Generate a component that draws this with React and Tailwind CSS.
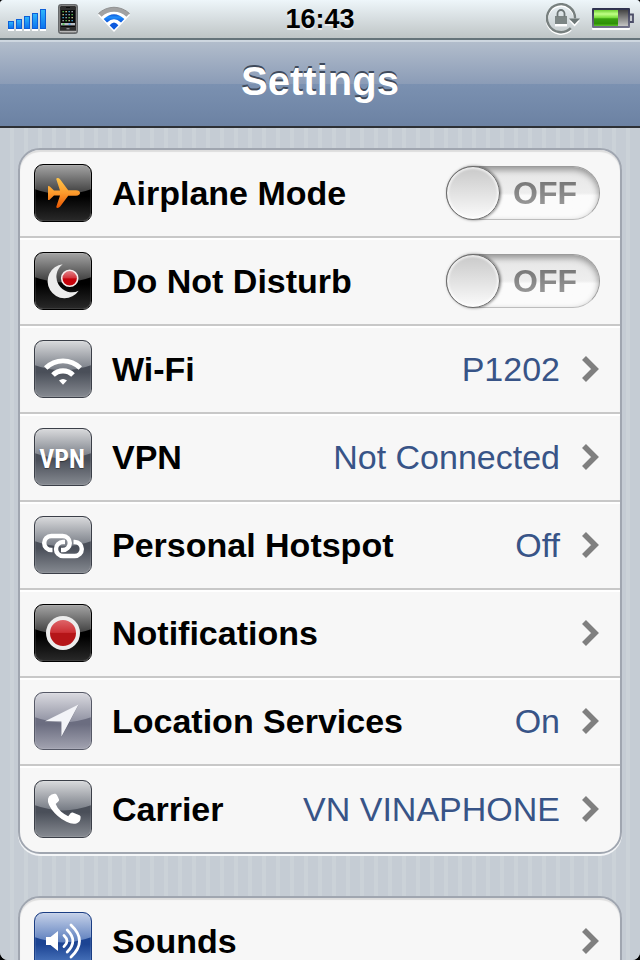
import { useState } from "react";

const tiles = {
  black: { top: "#a8a8a8", mid: "#3c3c3c", low: "#000000", bottom: "#2b2b2b", edge: "#000000" },
  gray: { top: "#dcdddf", mid: "#777c85", low: "#4a4f59", bottom: "#888c93", edge: "#3b3f48" },
  silver: { top: "#dcdce2", mid: "#9092a2", low: "#6b6d80", bottom: "#a4a5b2", edge: "#555866" },
  blue: { top: "#c9d4ea", mid: "#5c7ebd", low: "#1c4493", bottom: "#5b86cb", edge: "#1a3d83" },
};

function Tile({ id, tone, children }) {
  const c = tiles[tone];
  return (
    <svg viewBox="0 0 58 58" className="size-[58px] shrink-0" aria-hidden="true">
      <defs>
        <linearGradient id={`${id}-gloss`} x1="0" y1="0" x2="0" y2="30" gradientUnits="userSpaceOnUse">
          <stop offset="0" stopColor={c.top} />
          <stop offset="1" stopColor={c.mid} />
        </linearGradient>
        <linearGradient id={`${id}-base`} x1="0" y1="26" x2="0" y2="58" gradientUnits="userSpaceOnUse">
          <stop offset="0" stopColor={c.low} />
          <stop offset="0.2" stopColor={c.low} />
          <stop offset="1" stopColor={c.bottom} />
        </linearGradient>
        <clipPath id={`${id}-clip`}>
          <rect x="1" y="1" width="56" height="56" rx="8" />
        </clipPath>
      </defs>
      <g clipPath={`url(#${id}-clip)`}>
        <rect width="58" height="58" fill={`url(#${id}-base)`} />
        <path d="M0 0H58V25Q29 36 0 25Z" fill={`url(#${id}-gloss)`} />
      </g>
      <rect x="1.5" y="1.5" width="55" height="55" rx="7.5" fill="none" stroke="#fff" strokeOpacity="0.1" />
      <rect x="0.5" y="0.5" width="57" height="57" rx="8.5" fill="none" stroke={c.edge} />
      {children}
    </svg>
  );
}

function AirplaneIcon() {
  return (
    <Tile id="airplane" tone="black">
      <defs>
        <linearGradient id="airplane-fill" x1="0" y1="14" x2="0" y2="44" gradientUnits="userSpaceOnUse">
          <stop offset="0" stopColor="#ffc54a" />
          <stop offset="0.5" stopColor="#fb9a2c" />
          <stop offset="1" stopColor="#e85500" />
        </linearGradient>
      </defs>
      <path
        d="M14 22.3q.8-.7 1.8.2L20 26.4H26L22.3 15.3Q22.2 14 23.6 14 25 14 26.2 15.4L34.2 26.3H42Q46 26.6 46 29 46 31.4 42 31.7H34.2L26.2 42.6Q25 44 23.6 44 22.2 44 22.3 42.7L26 31.6H20L15.8 35.5Q14.8 36.4 14 35.7Z"
        fill="url(#airplane-fill)"
      />
    </Tile>
  );
}

function MoonIcon() {
  return (
    <Tile id="dnd" tone="black">
      <defs>
        <linearGradient id="dnd-dot" x1="0" y1="18" x2="0" y2="34" gradientUnits="userSpaceOnUse">
          <stop offset="0" stopColor="#e58a90" />
          <stop offset="0.5" stopColor="#d2343c" />
          <stop offset="0.55" stopColor="#c4000a" />
          <stop offset="1" stopColor="#c8060c" />
        </linearGradient>
      </defs>
      <path d="M28.7 12.3A17 17 0 1 0 44.7 38.7A15.5 15.5 0 0 1 28.7 12.3Z" fill="#ececec" />
      <circle cx="35.7" cy="26.3" r="8" fill="url(#dnd-dot)" stroke="#f6eded" strokeWidth="1.6" />
    </Tile>
  );
}

function WifiIcon() {
  return (
    <Tile id="wifi" tone="gray">
      <path d="M10 26.2A27 27 0 0 1 48 26.2L44.6 29.8A22 22 0 0 0 13.4 29.8Z" fill="#fff" />
      <path d="M17.2 33.2A16.6 16.6 0 0 1 40.8 33.2L37.2 36.8A11.6 11.6 0 0 0 20.8 36.8Z" fill="#fff" />
      <path d="M25 40.6Q29 37.2 33 40.6L29 44.8Z" fill="#fff" />
    </Tile>
  );
}

function VpnIcon() {
  return (
    <Tile id="vpn" tone="gray">
      <text
        x="28"
        y="40"
        textAnchor="middle"
        className="fill-white font-['Liberation_Sans_Narrow','Roboto_Condensed',sans-serif] text-[26px] font-bold [text-shadow:0_1px_1px_#0006]"
      >
        VPN
      </text>
    </Tile>
  );
}

function HotspotIcon() {
  return (
    <Tile id="hotspot" tone="gray">
      <g fill="none" stroke="#fff" strokeWidth="4.4">
        <path d="M18.5 34H17.2A7 7 0 0 1 17.2 20H28.8A7 7 0 0 1 28.8 34H27" />
        <path d="M39.5 26H40.8A7 7 0 0 1 40.8 40H29A7 7 0 0 1 29 26H31" />
      </g>
    </Tile>
  );
}

function NotificationsIcon() {
  return (
    <Tile id="notify" tone="black">
      <defs>
        <linearGradient id="notify-dot" x1="0" y1="15" x2="0" y2="43" gradientUnits="userSpaceOnUse">
          <stop offset="0" stopColor="#e0686c" />
          <stop offset="0.48" stopColor="#cc3035" />
          <stop offset="0.5" stopColor="#b51518" />
          <stop offset="1" stopColor="#b51518" />
        </linearGradient>
      </defs>
      <circle cx="29" cy="29" r="15" fill="url(#notify-dot)" stroke="#ececec" strokeWidth="4" />
    </Tile>
  );
}

function LocationIcon() {
  return (
    <Tile id="location" tone="silver">
      <path d="M11 30 44.5 13 27.4 45.5V30Z" fill="#2f3142" fillOpacity="0.35" />
      <path d="M11 29.2 44.5 12.4 27.4 44.8V29.4Z" fill="#f3f4f8" />
    </Tile>
  );
}

function CarrierIcon() {
  return (
    <Tile id="carrier" tone="gray">
      <path
        d="M15 16.5Q18 13.2 21.5 13.8 23 14.5 25 19.5 25.3 20.5 24.5 21.3L21.7 23.9Q23.5 28.6 27.2 31.8 30.8 34.8 34.2 36.2L36.8 33Q37.6 32.2 38.7 32.5L45.5 35.2Q47 36 46.6 37.8 46.4 42 43 43.2 38.5 44.8 32.5 41.8 23.5 37.4 17.5 29.2 11.8 21.2 15 16.5Z"
        fill="#fff"
      />
    </Tile>
  );
}

function SoundsIcon() {
  return (
    <Tile id="sounds" tone="blue">
      <path d="M12 25H16.5L24 19V39L16.5 33H12Z" fill="#fff" />
      <g fill="none" stroke="#fff" strokeWidth="2.8" strokeLinecap="round">
        <path d="M30 23.4Q36 29 30 34.6" />
        <path d="M33.2 18Q44.5 29 33.2 40" />
        <path d="M37 13Q54 29 37 45" />
      </g>
    </Tile>
  );
}

function SignalBars() {
  const tops = [21, 19, 16, 13, 9];
  return (
    <svg viewBox="0 0 38 38" className="size-[38px]" role="img" aria-label="Signal strength">
      <defs>
        <linearGradient id="signal" x1="0" y1="0" x2="0" y2="1">
          <stop offset="0" stopColor="#2fb5fb" />
          <stop offset="1" stopColor="#0c74ee" />
        </linearGradient>
      </defs>
      {tops.map((y, i) => (
        <g key={y}>
          <rect x={i * 8} y={y + 2} width="6" height={29 - y} fill="#fff" />
          <rect x={i * 8} y={y} width="6" height={29 - y} fill="#0d5fd8" />
          <rect x={i * 8 + 1} y={y + 1} width="4" height={27 - y} fill="url(#signal)" />
        </g>
      ))}
    </svg>
  );
}

function PhoneGlyph() {
  const dots = ["#5fd15a", "#e8e0a0", "#48b9ea", "#b9c0c8"];
  return (
    <svg viewBox="0 0 20 30" className="h-[30px] w-5" aria-hidden="true">
      <rect x="0.75" y="0.75" width="18.5" height="28.5" rx="2.5" fill="#2e2e2e" stroke="#66696b" strokeWidth="1.5" />
      <rect x="1.5" y="1.5" width="17" height="27" rx="2" fill="none" stroke="#aaa" strokeWidth="0.6" />
      <rect x="8" y="3" width="4" height="1" fill="#0a0a0a" />
      <rect x="3" y="6" width="14" height="17" fill="#080808" />
      {[7, 10, 13, 16].map((y, row) =>
        dots.map((_, col) => (
          <rect key={`${y}-${col}`} x={4.5 + col * 3} y={y} width="1.3" height="1.3" fill={dots[(row + col) % 4]} />
        ))
      )}
      <rect x="3" y="19" width="14" height="2.4" fill="#b7bcc2" />
      <rect x="4.5" y="19.4" width="2" height="1.6" fill="#49c24a" />
      <rect x="10.5" y="19.4" width="2" height="1.6" fill="#4a9ee8" />
      <rect x="8.5" y="24" width="3" height="1.4" fill="#8a8a8a" />
      <rect x="1.8" y="26.8" width="16.4" height="1" fill="#d8d8d8" />
    </svg>
  );
}

function WifiStatus() {
  return (
    <svg viewBox="0 0 32 26" className="h-[26px] w-8" role="img" aria-label="Wi-Fi">
      <defs>
        <linearGradient id="wifi-blue" x1="0" y1="8" x2="0" y2="24" gradientUnits="userSpaceOnUse">
          <stop offset="0" stopColor="#0c50d4" />
          <stop offset="0.2" stopColor="#1e8cfa" />
          <stop offset="0.5" stopColor="#0d58dc" />
          <stop offset="1" stopColor="#0a5be0" />
        </linearGradient>
      </defs>
      <path d="M0 9A22.6 22.6 0 0 1 32 9L16 26Z" fill="#fff" />
      <path d="M.4 7.6A22.4 22.4 0 0 1 31.6 7.6L28.4 10.8A17.8 17.8 0 0 0 3.6 10.8Z" fill="#a2a2a2" />
      <path d="M.4 7.6A22.4 22.4 0 0 1 31.6 7.6" fill="none" stroke="#858585" strokeWidth="0.8" />
      <path d="M5.6 13Q16 3.6 26.4 13L23 16.4Q16 10.2 9 16.4Z" fill="url(#wifi-blue)" />
      <path d="M11.6 19.2Q16 13.6 20.4 19.2L16 23.8Z" fill="url(#wifi-blue)" />
    </svg>
  );
}

function RotationLock() {
  return (
    <svg viewBox="0 0 34 32" className="h-8 w-[34px]" role="img" aria-label="Rotation locked">
      <g transform="translate(0 1.4)" stroke="#fff" fill="none">
        <path d="M24.8 25.2A14 14 0 1 1 29 15.5" strokeWidth="2.6" />
        <path d="M23 16H34L28.6 22Z" fill="#fff" stroke="none" />
        <rect x="9" y="14" width="12" height="8" fill="#fff" stroke="none" />
      </g>
      <path d="M24.8 25.2A14 14 0 1 1 29 15.5" fill="none" stroke="#78807f" strokeWidth="2.4" />
      <path d="M23 15.4H34L28.6 21.2Z" fill="#6d7676" />
      <rect x="9" y="13" width="12" height="8" fill="#7d8685" />
      <path d="M11.5 13.5V10.5A3.5 3.5 0 0 1 18.5 10.5V13.5" fill="none" stroke="#6d7676" strokeWidth="1.8" />
    </svg>
  );
}

function Battery() {
  return (
    <svg viewBox="0 0 42 22" className="h-[22px] w-[42px]" role="img" aria-label="Battery">
      <defs>
        <linearGradient id="charge" x1="0" y1="0" x2="0" y2="1">
          <stop offset="0" stopColor="#6fd034" />
          <stop offset="0.25" stopColor="#c0ff86" />
          <stop offset="0.48" stopColor="#78dc3c" />
          <stop offset="0.55" stopColor="#38a010" />
          <stop offset="0.85" stopColor="#2f9008" />
          <stop offset="1" stopColor="#5cc428" />
        </linearGradient>
        <linearGradient id="drained" x1="0" y1="0" x2="0" y2="1">
          <stop offset="0" stopColor="#444" />
          <stop offset="1" stopColor="#c4c4c4" />
        </linearGradient>
        <linearGradient id="shell" x1="0" y1="0" x2="0" y2="1">
          <stop offset="0" stopColor="#2c2f4c" />
          <stop offset="1" stopColor="#73738b" />
        </linearGradient>
      </defs>
      <rect y="2" width="38" height="20" rx="1" fill="#fff" />
      <rect width="38" height="20" rx="1" fill="url(#shell)" />
      <rect x="2" y="2" width="34" height="16" fill="url(#drained)" />
      <rect x="2" y="2" width="24" height="16" fill="url(#charge)" />
      <path d="M38 6.5H41V14H38" fill="#c7cbd0" stroke="#4c4e68" strokeWidth="1.8" />
    </svg>
  );
}

function Chevron() {
  return (
    <svg viewBox="0 0 18 26" className="h-[26px] w-[18px] shrink-0" aria-hidden="true">
      <path d="M2 2 13 13 2 24" fill="none" stroke="#7f7f7f" strokeWidth="5.6" />
    </svg>
  );
}

function Toggle({ id }) {
  const [on, setOn] = useState(false);
  return (
    <label
      htmlFor={id}
      className="flex h-[54px] w-[154px] shrink-0 cursor-pointer items-center rounded-full border border-[#9b9b9b] border-b-[#bdbdbd] bg-linear-to-b from-[#e6e6e6] from-0% via-[#eeeeee] via-50% to-[#fbfbfb] to-55% shadow-[inset_0_3px_6px_#0000005c] has-checked:flex-row-reverse"
    >
      <input
        id={id}
        type="checkbox"
        role="switch"
        className="sr-only"
        checked={on}
        onChange={(e) => setOn(e.target.checked)}
      />
      <span className="-m-px size-[54px] shrink-0 rounded-full border border-[#6b6b6b] bg-linear-to-b from-[#c9c9c9] to-[#fbfbfb] shadow-[inset_0_0_2px_2px_#ffffffa0,1px_0_3px_#00000080]" />
      <span className="flex-1 bg-linear-to-b from-[#6f6f6f] to-[#a0a0a0] bg-clip-text pr-2 text-center text-[32px] leading-9 font-bold text-transparent">
        {on ? "ON" : "OFF"}
      </span>
    </label>
  );
}

function ToggleRow({ id, icon, label }) {
  return (
    <li className="flex h-22 items-center gap-5 border-b-2 border-[#c8c8c8] pr-5 pl-3.5 shadow-[0_2px_0_#fff]">
      {icon}
      <label htmlFor={id} className="flex-1 text-[34px] leading-10 font-bold">{label}</label>
      <Toggle id={id} />
    </li>
  );
}

function LinkRow({ icon, label, value }) {
  return (
    <li className="border-b-2 border-[#c8c8c8] shadow-[0_2px_0_#fff] last:border-b-0 last:shadow-none">
      <a href="#" className="flex h-[86px] items-center gap-5 pr-5 pl-3.5 whitespace-nowrap">
        {icon}
        <span className="flex-1 text-[34px] leading-10 font-bold">{label}</span>
        <span className="pr-0.5 text-[34px] leading-10 text-[#385487]">{value}</span>
        <Chevron />
      </a>
    </li>
  );
}

function Group({ children }) {
  return (
    <ul className="rounded-[22px] border-2 border-[#a0a6b0] bg-[#f7f7f7] shadow-[0_2px_0_#f4f6f8,inset_0_2px_1px_#0000001a]">
      {children}
    </ul>
  );
}

export default function App() {
  return (
    <div className="h-screen bg-black font-['Liberation_Sans',Arial,sans-serif] text-black">
      <div className="flex h-full flex-col overflow-hidden rounded-t-[4px] rounded-b-[8px] bg-[#c5ccd4]">
        <div className="grid h-10 shrink-0 grid-cols-3 items-center border-b-2 border-[#66747a] bg-linear-to-b from-[#eef6fa] to-[#bfc5c6] px-2">
          <div className="flex items-center">
            <SignalBars />
            <div className="ml-3 flex items-center gap-5">
              <PhoneGlyph />
              <WifiStatus />
            </div>
          </div>
          <time className="text-center text-[27px] leading-8 font-bold [text-shadow:0_2px_0_#ffffff99]">16:43</time>
          <div className="-mr-0.5 flex items-center justify-end gap-3">
            <RotationLock />
            <Battery />
          </div>
        </div>

        <header className="flex h-22 shrink-0 items-center justify-center border-t-2 border-b-2 border-t-[#ced7e0] border-b-[#2d3035] bg-[linear-gradient(#b2bdcc_0%,#8b9cb7_50%,#7b91b1_50%,#6c82a3_100%)] pb-1.5">
          <h1 className="text-[40px] leading-12 font-bold text-white [text-shadow:0_-2px_0_#3f4a5b]">Settings</h1>
        </header>

        <main className="flex-1 overflow-y-auto bg-[repeating-linear-gradient(90deg,#c5ccd4_0px,#c5ccd4_10px,#cbd2d8_10px,#cbd2d8_14px)] px-[18px] pt-5 pb-10 [scrollbar-width:none]">
          <div className="flex flex-col gap-[42px]">
            <Group>
              <ToggleRow id="airplane-mode" icon={<AirplaneIcon />} label="Airplane Mode" />
              <ToggleRow id="do-not-disturb" icon={<MoonIcon />} label="Do Not Disturb" />
              <LinkRow icon={<WifiIcon />} label="Wi-Fi" value="P1202" />
              <LinkRow icon={<VpnIcon />} label="VPN" value="Not Connected" />
              <LinkRow icon={<HotspotIcon />} label="Personal Hotspot" value="Off" />
              <LinkRow icon={<NotificationsIcon />} label="Notifications" />
              <LinkRow icon={<LocationIcon />} label="Location Services" value="On" />
              <LinkRow icon={<CarrierIcon />} label="Carrier" value="VN VINAPHONE" />
            </Group>
            <Group>
              <LinkRow icon={<SoundsIcon />} label="Sounds" />
            </Group>
          </div>
        </main>
      </div>
    </div>
  );
}
